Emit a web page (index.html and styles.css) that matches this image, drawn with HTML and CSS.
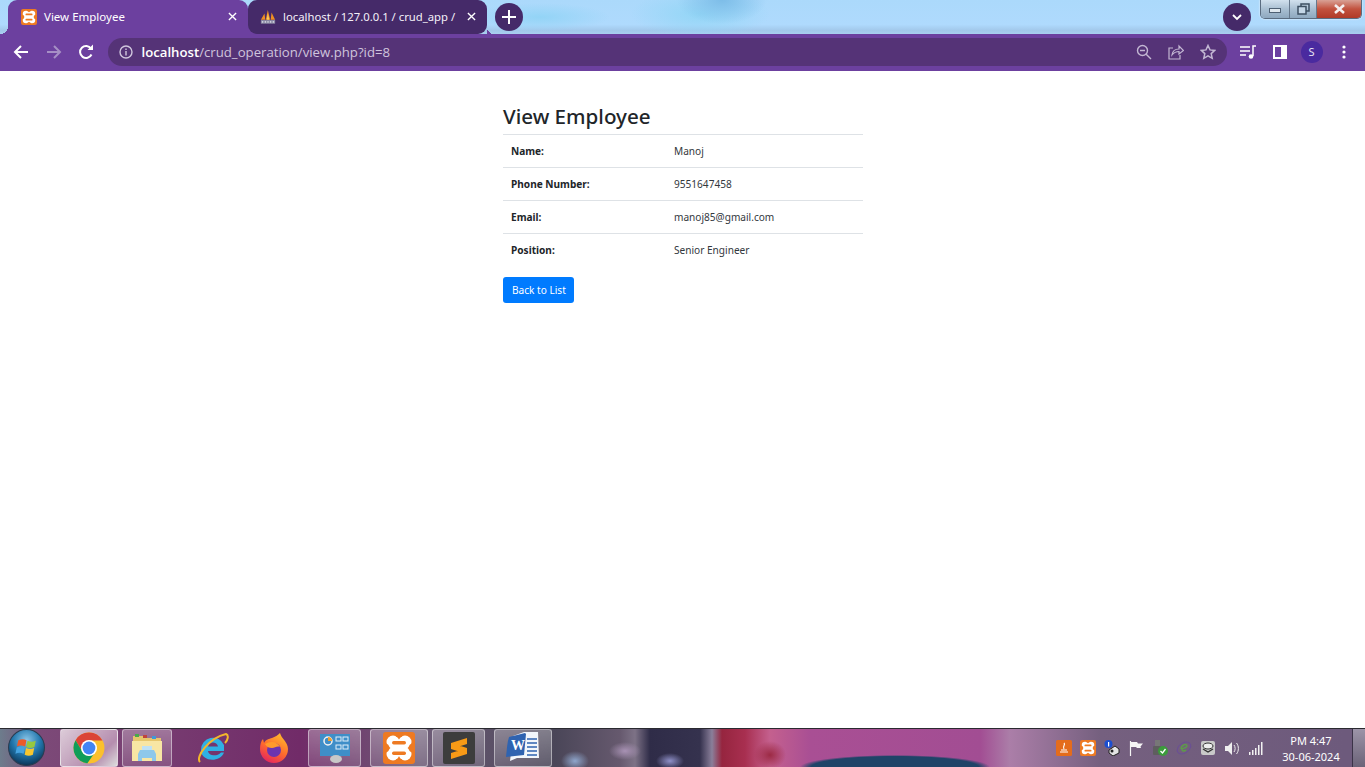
FILE: index.html
```html
<!DOCTYPE html>
<html lang="en">
<head>
    <meta charset="UTF-8">
    <meta name="viewport" content="width=device-width, initial-scale=1.0">
    <title>View Employee</title>
    <link rel="stylesheet" href="styles.css">
</head>
<body>
<div class="screen">

    <!-- tabs -->
    <div class="tabstrip">
        <div class="tab tab-active">
            <svg class="favicon" viewBox="0 0 32 32">
                <rect width="32" height="32" rx="4" fill="#ee7a22"/>
                <circle cx="10" cy="10" r="6.500" fill="#fff"/><circle cx="22" cy="10" r="6.500" fill="#fff"/>
                <circle cx="10" cy="22" r="6.500" fill="#fff"/><circle cx="22" cy="22" r="6.500" fill="#fff"/>
                <rect x="8" y="8" width="16" height="16" fill="#fff"/>
                <circle cx="16" cy="1.500" r="4" fill="#ee7a22"/><circle cx="16" cy="30.500" r="4" fill="#ee7a22"/>
                <circle cx="2" cy="16" r="4.500" fill="#ee7a22"/><circle cx="30" cy="16" r="4.500" fill="#ee7a22"/>
                <rect x="9" y="9" width="14" height="3.500" rx="1.700" fill="#ee7a22"/>
                <rect x="9" y="19.500" width="14" height="3.500" rx="1.700" fill="#ee7a22"/>
            </svg>
            <span class="tab-title">View Employee</span>
            <svg class="tab-close" viewBox="0 0 10 10"><path d="M1 1l8 8M9 1l-8 8" stroke="#fff" stroke-width="1.500"/></svg>
        </div>
        <div class="tab tab-other">
            <svg class="favicon" viewBox="0 0 18 16">
                <path d="M1 11L5 4l1 7zM6.500 11L8.800 0l2.700 11zM12 11l1-8 4 8z" fill="#ef8f22"/>
                <path d="M7.500 11L8.800 4l1.700 7z" fill="#f8cd5c"/>
                <rect x="1" y="11.500" width="16" height="4" fill="#8f8fa8"/>
                <path d="M3 12.500v2M6 12.500v2M9 12.500v2M12 12.500v2M15 12.500v2" stroke="#e4e4ee" stroke-width="1"/>
            </svg>
            <span class="tab-title tab-title-fade">localhost / 127.0.0.1 / crud_app /</span>
            <svg class="tab-close" viewBox="0 0 10 10"><path d="M1 1l8 8M9 1l-8 8" stroke="#fff" stroke-width="1.500"/></svg>
        </div>
        <div class="round-btn new-tab">
            <svg width="14" height="14" viewBox="0 0 14 14"><path d="M7 0v14M0 7h14" stroke="#fff" stroke-width="2"/></svg>
        </div>
        <div class="round-btn tab-search">
            <svg width="10" height="7" viewBox="0 0 10 7"><path d="M1 1l4 4 4-4" fill="none" stroke="#fff" stroke-width="1.800"/></svg>
        </div>
        <div class="win-controls">
            <div class="win-btn win-min"><span class="min-bar"></span></div>
            <div class="win-btn win-max">
                <svg width="13" height="12" viewBox="0 0 13 12"><rect x="4" y="1" width="8" height="7" fill="none" stroke="#3c4f62" stroke-width="1.500"/><rect x="1" y="3.500" width="8" height="7.500" fill="#c4d6e6" stroke="#3c4f62" stroke-width="1.500"/></svg>
            </div>
            <div class="win-btn win-close">
                <svg width="13" height="10" viewBox="0 0 13 10"><path d="M2 1l9 8M11 1L2 9" stroke="#f4eeee" stroke-width="2.600"/></svg>
            </div>
        </div>
    </div>

    <!-- toolbar -->
    <div class="toolbar">
        <div class="nav-btn">
            <svg width="16" height="16" viewBox="0 0 16 16"><path d="M15 8H2M8 2L2 8l6 6" fill="none" stroke="#fff" stroke-width="2"/></svg>
        </div>
        <div class="nav-btn">
            <svg width="16" height="16" viewBox="0 0 16 16"><path d="M1 8h13M8 2l6 6-6 6" fill="none" stroke="#a68fc5" stroke-width="2"/></svg>
        </div>
        <div class="nav-btn">
            <svg width="16" height="16" viewBox="0 0 16 16"><path d="M13.500 10.500A6 6 0 1 1 13 4.500" fill="none" stroke="#fff" stroke-width="2"/><path d="M9.500 6H15V.5z" fill="#fff"/></svg>
        </div>
        <div class="omnibox">
            <svg class="info-icon" width="14" height="14" viewBox="0 0 14 14"><circle cx="7" cy="7" r="6" fill="none" stroke="#d0c6dd" stroke-width="1.400"/><path d="M7 6v4.500M7 3.500v1.500" stroke="#d0c6dd" stroke-width="1.400"/></svg>
            <span class="url"><b>localhost</b>/crud_operation/view.php?id=8</span>
            <div class="omni-icons">
                <svg width="16" height="16" viewBox="0 0 16 16"><circle cx="6.500" cy="6.500" r="5" fill="none" stroke="#c3b7d3" stroke-width="1.400"/><path d="M4 6.500h5M10.200 10.200L15 15" stroke="#c3b7d3" stroke-width="1.400"/></svg>
                <svg width="16" height="16" viewBox="0 0 16 16"><path d="M5 4H1v11h11v-4" fill="none" stroke="#c3b7d3" stroke-width="1.200"/><path d="M4 11c.5-4 3.500-6 7-6V2l4.500 4.500L11 10V7.500c-3 0-5 1-7 3.500z" fill="none" stroke="#c3b7d3" stroke-width="1.200"/></svg>
                <svg width="16" height="16" viewBox="0 0 16 16"><path d="M8 1.500l2 4.400 4.700.5-3.500 3.200 1 4.700L8 11.900l-4.200 2.400 1-4.700L1.300 6.400 6 5.900z" fill="none" stroke="#c3b7d3" stroke-width="1.500"/></svg>
            </div>
        </div>
        <div class="tool-btn">
            <svg width="16" height="14" viewBox="0 0 16 14"><path d="M0 2h10M0 6h10M0 10h6" stroke="#fff" stroke-width="1.500"/><path d="M13 11V1h3" fill="none" stroke="#fff" stroke-width="1.500"/><circle cx="11" cy="11.500" r="2.300" fill="#fff"/></svg>
        </div>
        <div class="tool-btn">
            <svg width="14" height="14" viewBox="0 0 14 14"><rect width="14" height="14" fill="#fff"/><rect x="2" y="2" width="6" height="10" fill="#6b3fa0"/></svg>
        </div>
        <div class="tool-btn"><span class="avatar">S</span></div>
        <div class="tool-btn">
            <svg width="4" height="14" viewBox="0 0 4 14"><circle cx="2" cy="2" r="1.600" fill="#fff"/><circle cx="2" cy="7" r="1.600" fill="#fff"/><circle cx="2" cy="12" r="1.600" fill="#fff"/></svg>
        </div>
    </div>

    <!-- page -->
    <div class="page">
        <div class="container">
            <h2>View Employee</h2>
            <table class="info-table">
                <tr><th>Name:</th><td>Manoj</td></tr>
                <tr><th>Phone Number:</th><td>9551647458</td></tr>
                <tr><th>Email:</th><td>manoj85@gmail.com</td></tr>
                <tr><th>Position:</th><td>Senior Engineer</td></tr>
            </table>
            <a class="btn-primary" href="#">Back to List</a>
        </div>
    </div>

    <!-- taskbar -->
    <div class="taskbar">
        <div class="start-orb">
            <svg width="37" height="37" viewBox="0 0 36 36">
                <defs>
                    <radialGradient id="orb" cx="50%" cy="30%" r="70%"><stop offset="0" stop-color="#8cc6e8"/><stop offset=".55" stop-color="#2277ad"/><stop offset="1" stop-color="#0b3557"/></radialGradient>
                </defs>
                <circle cx="18" cy="18" r="17.500" fill="url(#orb)" stroke="#2a3c50"/>
                <path d="M10 11c3-1.500 5.500-1.500 8 0l-1.300 6c-3-1.300-5.500-1.300-8 0z" fill="#ec5a2a"/>
                <path d="M19 11.500c2.500 1.300 5 1.300 8 0l-1.300 6c-3 1.300-5.500 1.300-8 0z" fill="#97c83e"/>
                <path d="M8.500 18c3-1.300 5-1.300 8 0l-1.300 6c-3-1.300-5-1.300-8 0z" fill="#46a3e0"/>
                <path d="M17.500 18.500c3 1.300 5 1.300 8 0L24.200 25c-3 1.300-5 1.300-8 0z" fill="#f8c62e"/>
            </svg>
        </div>
        <div class="task task-chrome">
            <svg width="32" height="32" viewBox="0 0 30 30">
                <circle cx="15" cy="15" r="14.500" fill="#fbc02d"/>
                <path d="M15 8h12.600A14.500 14.500 0 0 0 2.400 7.700L8.900 18.500A7 7 0 0 1 15 8z" fill="#db4437"/>
                <path d="M2.400 7.700A14.500 14.500 0 0 0 13.500 29.400L21 18.500A7 7 0 0 1 8.900 18.500z" fill="#0f9d58"/>
                <circle cx="15" cy="15" r="7.500" fill="#fff"/>
                <circle cx="15" cy="15" r="6" fill="#4285f4"/>
            </svg>
        </div>
        <div class="task task-plain task-explorer">
            <svg width="32" height="30" viewBox="0 0 32 30">
                <path d="M2 3h12l2 2h14v10H2z" fill="#e6c66c"/>
                <rect x="4" y="1" width="4" height="3" fill="#4aa84a"/>
                <rect x="12" y="2" width="4" height="3" fill="#c0443c"/>
                <rect x="21" y="3" width="4" height="3" fill="#3f9ad8"/>
                <path d="M1 8h30v20H1z" fill="#f8e6a4"/>
                <path d="M9 17h14l2 4v7h-4v-3H11v3H7v-7z" fill="#8ec8ea"/>
                <rect x="11" y="13" width="10" height="4" fill="#bfe2f5"/>
            </svg>
        </div>
        <div class="task-group">
            <svg width="32" height="34" viewBox="0 0 32 32">
                <path d="M4 18a12 12 0 0 1 23-5v6H11c.5 5 9 6 13 1.500h3C23 31 4 30 4 18zM11 14.500h10c-1-5.500-9-5.500-10 0z" fill="#2fb0e4"/>
                <path d="M3 30C-2 25 12 6 29 2c3 1 2 6-1 9" fill="none" stroke="#f3b62b" stroke-width="2"/>
            </svg>
            <svg width="32" height="34" viewBox="0 0 32 32">
                <defs>
                    <linearGradient id="fox" x1="0.800" y1="0" x2="0.300" y2="1"><stop offset="0" stop-color="#ffc02c"/><stop offset=".55" stop-color="#ff6b2c"/><stop offset="1" stop-color="#e5255f"/></linearGradient>
                </defs>
                <path d="M22 1c1 5 8 9 8 16a14 14 0 0 1-28 0c0-4 1-8 3-10l1 4c2-4 5-4 8-5 3-1 6-3 8-5z" fill="url(#fox)"/>
                <circle cx="16" cy="18" r="7" fill="#6d34b0"/>
                <path d="M7 12c5-3 12-3 15 3-3-1.500-5 1-8 1-3 0-5-1-7-4z" fill="#ff9a2c"/>
            </svg>
        </div>
        <div class="task task-plain task-panel">
            <svg width="32" height="32" viewBox="0 0 32 32">
                <rect x="1" y="2" width="30" height="22" fill="#3f8ec8"/>
                <circle cx="9" cy="9" r="4" fill="none" stroke="#f2f2f2" stroke-width="1.500"/>
                <path d="M9 9V5a4 4 0 0 1 4 4z" fill="#f0a030"/>
                <rect x="17" y="5" width="5" height="4" fill="none" stroke="#dfeefa"/>
                <rect x="24" y="5" width="5" height="4" fill="none" stroke="#dfeefa"/>
                <rect x="17" y="13" width="5" height="4" fill="none" stroke="#dfeefa"/>
                <rect x="24" y="13" width="5" height="4" fill="none" stroke="#dfeefa"/>
                <ellipse cx="17" cy="27" rx="6" ry="4" fill="#c8c8c8"/>
            </svg>
        </div>
        <div class="task task-plain task-xampp">
            <svg width="32" height="32" viewBox="0 0 32 32">
                <rect width="32" height="32" rx="3" fill="#ee7a22"/>
                <circle cx="10" cy="10" r="6.500" fill="#fff"/><circle cx="22" cy="10" r="6.500" fill="#fff"/>
                <circle cx="10" cy="22" r="6.500" fill="#fff"/><circle cx="22" cy="22" r="6.500" fill="#fff"/>
                <rect x="8" y="8" width="16" height="16" fill="#fff"/>
                <circle cx="16" cy="1.500" r="4" fill="#ee7a22"/><circle cx="16" cy="30.500" r="4" fill="#ee7a22"/>
                <circle cx="2" cy="16" r="4.500" fill="#ee7a22"/><circle cx="30" cy="16" r="4.500" fill="#ee7a22"/>
                <rect x="9" y="9" width="14" height="3.500" rx="1.700" fill="#ee7a22"/>
                <rect x="9" y="19.500" width="14" height="3.500" rx="1.700" fill="#ee7a22"/>
            </svg>
        </div>
        <div class="task task-plain task-sublime">
            <svg width="32" height="32" viewBox="0 0 32 32">
                <rect width="32" height="32" rx="2" fill="#3d3d3d"/>
                <path d="M8 11L24 6v6L8 17zM8 11l16 5v6L8 17zM8 21l16-5v6L8 27z" fill="#f89a16"/>
            </svg>
        </div>
        <div class="task task-plain task-word">
            <svg width="36" height="34" viewBox="0 0 36 34">
                <path d="M5 30L8 5l11-4h14l1 26H12z" fill="#f2f6fb"/>
                <path d="M1 26c1-8 1-14 3-20l16-4 1 1-2 21z" fill="#2f63b0"/>
                <path d="M22 8h10M22 12h10M22 16h10M22 20h10M22 24h10" stroke="#2f63b0" stroke-width="1.600"/>
                <text x="6" y="19" class="word-w">W</text>
            </svg>
        </div>

        <div class="tray">
            <svg class="tray-icon" viewBox="0 0 16 16"><rect width="16" height="16" rx="1.500" fill="#e46c1c"/><path d="M4 12h8M5 10h6M8 3c2 2-2 3 0 6" fill="none" stroke="#fff" stroke-width="1.200"/></svg>
            <svg class="tray-icon" viewBox="0 0 32 32">
                <rect width="32" height="32" rx="4" fill="#ee7a22"/>
                <circle cx="10" cy="10" r="6.500" fill="#fff"/><circle cx="22" cy="10" r="6.500" fill="#fff"/>
                <circle cx="10" cy="22" r="6.500" fill="#fff"/><circle cx="22" cy="22" r="6.500" fill="#fff"/>
                <rect x="8" y="8" width="16" height="16" fill="#fff"/>
                <circle cx="16" cy="1.500" r="4" fill="#ee7a22"/><circle cx="16" cy="30.500" r="4" fill="#ee7a22"/>
                <circle cx="2" cy="16" r="4.500" fill="#ee7a22"/><circle cx="30" cy="16" r="4.500" fill="#ee7a22"/>
                <rect x="9" y="9" width="14" height="3.500" rx="1.700" fill="#ee7a22"/>
                <rect x="9" y="19.500" width="14" height="3.500" rx="1.700" fill="#ee7a22"/>
            </svg>
            <svg class="tray-icon" viewBox="0 0 16 16"><circle cx="4.500" cy="4" r="4" fill="#1c4fd0"/><rect x="4" y="2" width="1.200" height="4.500" fill="#fff"/><path d="M5 10l6-4 4 3v4l-6 3-4-3z" fill="#e4e4e4" stroke="#222"/><circle cx="8" cy="11" r="1.500" fill="#222"/></svg>
            <svg class="tray-icon" viewBox="0 0 16 16"><path d="M2.500 1v15" stroke="#f5f5f5" stroke-width="1.200"/><path d="M3 2h6l1 1.500h5l-2.500 3 .5 1.500H9L8 7H3z" fill="#f5f5f5"/></svg>
            <svg class="tray-icon" viewBox="0 0 16 16"><rect x="3" y="0" width="5" height="6" fill="#777"/><rect x="1" y="6" width="8" height="9" rx="1" fill="#5e5e5e"/><circle cx="11" cy="11" r="5" fill="#3c9b3c"/><path d="M8.500 11l2 2 3-4" fill="none" stroke="#fff" stroke-width="1.300"/></svg>
            <svg class="tray-icon" viewBox="0 0 16 16"><ellipse cx="8" cy="8" rx="7.500" ry="5" transform="rotate(-35 8 8)" fill="none" stroke="#6a4f95"/><path d="M5 9c0-4 6-6 6-3 0 2-4 2-5 3 0 3 3 2 4 1" fill="none" stroke="#5d9c4a" stroke-width="1.400"/></svg>
            <svg class="tray-icon" viewBox="0 0 16 16"><rect x="1" y="1" width="14" height="14" rx="2" fill="#c9c9c9"/><ellipse cx="8" cy="6" rx="5" ry="3" fill="#eee" stroke="#333"/><path d="M3 9l5 3 5-3" fill="none" stroke="#333" stroke-width="1.400"/></svg>
            <svg class="tray-icon" viewBox="0 0 16 16"><path d="M1 6h3l4-4v13l-4-4H1z" fill="#eee"/><path d="M10 5c1.500 2 1.500 5 0 7M12.500 3c2.500 3 2.500 8 0 11" fill="none" stroke="#eee"/></svg>
            <svg class="tray-icon" viewBox="0 0 16 16"><path d="M1 12h1.500v3H1zM4 10h1.500v5H4zM7 8h1.500v7H7zM10 5h1.500v10H10zM13 2h1.500v13H13z" fill="#f2f2f2"/></svg>
            <div class="clock"><span>PM 4:47</span><span>30-06-2024</span></div>
            <div class="show-desktop"></div>
        </div>
    </div>

</div>
</body>
</html>
```

FILE: styles.css
```css
* {
    box-sizing: border-box;
}

html, body {
    margin: 0;
    height: 100%;
    overflow: hidden;
}

body {
    font-family: 'Noto Sans', 'Open Sans', sans-serif;
    background-color: #fff;
    color: #212529;
}

.screen {
    height: 767px;
    display: flex;
    flex-direction: column;
}

/* tab strip */
.tabstrip {
    height: 34px;
    display: flex;
    align-items: flex-start;
    padding-left: 8px;
    background:
        radial-gradient(ellipse 45px 24px at 722px 0, #7dbde8, transparent),
        radial-gradient(ellipse 70px 14px at 540px 17px, #93d4f6, transparent),
        radial-gradient(ellipse 70px 24px at 700px 14px, #93d6f6, transparent),
        linear-gradient(180deg, #abd9fb 0%, #afdafd 72%, #a2c8ea 90%, #a9cff0 100%);
}

.tab {
    position: relative;
    height: 34px;
    padding-bottom: 1px;
    display: flex;
    align-items: center;
    font-size: 11.500px;
    color: #fff;
}

.tab-active {
    width: 240px;
    padding-left: 13px;
    padding-right: 10px;
    background-color: #6c409f;
    border-radius: 9px 9px 0 0;
}

/* curved foot of the active tab */
.tab-active::before {
    content: "";
    position: absolute;
    left: -8px;
    bottom: 0;
    width: 8px;
    height: 8px;
    background: radial-gradient(circle at 0 0, transparent 8px, #6c409f 8px);
}

.tab-active::after {
    content: "";
    position: absolute;
    left: 100%;
    bottom: 0;
    width: 10px;
    height: 10px;
    background-color: #6c409f;
}

.tab-other {
    z-index: 1;
    width: 239px;
    padding-left: 12px;
    padding-right: 10px;
    font-size: 11.300px;
    background-color: #452a69;
    border-radius: 9px;
}

.tab-other::after {
    content: "";
    position: absolute;
    left: 100%;
    bottom: 0;
    width: 7px;
    height: 7px;
    background: radial-gradient(circle at 100% 0, transparent 7px, #6c409f 7px);
}

.favicon {
    width: 16px;
    height: 16px;
    flex: none;
    margin-right: 7px;
}

.tab-title {
    flex: 1;
    white-space: nowrap;
}

.tab-title-fade {
    color: #f4f0f8;
}

.tab-close {
    width: 9px;
    height: 9px;
    flex: none;
    margin: 0 1px 0 12px;
}

.round-btn {
    width: 28px;
    height: 28px;
    flex: none;
    margin-top: 3px;
    border-radius: 50%;
    background-color: #452a69;
    display: flex;
    align-items: center;
    justify-content: center;
}

.new-tab {
    margin-left: 8px;
}

.tab-search {
    margin-left: auto;
}

.win-controls {
    width: 102px;
    height: 19px;
    flex: none;
    margin: 0 3px 0 9px;
    display: flex;
    border: 1px solid #5a6c80;
    border-top: none;
    border-radius: 0 0 5px 5px;
    overflow: hidden;
    box-shadow: 0 0 2px #fff;
}

.win-btn {
    display: flex;
    align-items: center;
    justify-content: center;
}

.win-min {
    width: 29px;
    background: linear-gradient(180deg, #d2e1ee, #a9bfd2 50%, #8ea8bf);
    border-right: 1px solid #66788c;
}

.min-bar {
    width: 12px;
    height: 5px;
    margin-top: 3px;
    background-color: #dfe8ef;
    border: 1px solid #4e6073;
}

.win-max {
    width: 27px;
    background: linear-gradient(180deg, #d2e1ee, #a9bfd2 50%, #8ea8bf);
    border-right: 1px solid #66788c;
}

.win-close {
    flex: 1;
    background: linear-gradient(180deg, #d9a195, #c2523e 50%, #b03a28);
}

/* toolbar */
.toolbar {
    height: 37px;
    display: flex;
    align-items: center;
    padding: 0 5px 2px;
    background-color: #6c409f;
}

.nav-btn {
    width: 32.500px;
    flex: none;
    display: flex;
    justify-content: center;
}

.omnibox {
    width: 1119px;
    height: 28px;
    margin: 0 5px 0 5px;
    padding: 0 11px 0 11px;
    flex: none;
    display: flex;
    align-items: center;
    border-radius: 14px;
    background-color: #553377;
}

.info-icon {
    flex: none;
    margin-right: 9px;
}

.url {
    font-family: 'Open Sans', 'Noto Sans', sans-serif;
    font-size: 13.200px;
    color: #cfc4dc;
    white-space: nowrap;
}

.url b {
    font-weight: 600;
    color: #fff;
}

.omni-icons {
    margin-left: auto;
    display: flex;
    gap: 16px;
}

.tool-btn {
    width: 32px;
    flex: none;
    display: flex;
    justify-content: center;
    align-items: center;
}

.avatar {
    width: 22px;
    height: 22px;
    border-radius: 50%;
    background-color: #4a2a9f;
    color: #e8e4f4;
    font-size: 11px;
    display: flex;
    align-items: center;
    justify-content: center;
}

/* page content */
.page {
    flex: 1;
    padding-left: 1px;
    background-color: #fff;
}

.container {
    width: 360px;
    margin: 0 auto;
    padding-top: 28px;
}

h2 {
    margin: 0;
    font-size: 20.600px;
    font-weight: 500;
    line-height: 35px;
    color: #212529;
}

.info-table {
    width: 100%;
    border-collapse: collapse;
    margin-bottom: 10px;
    table-layout: fixed;
    font-size: 10.100px;
}

.info-table th,
.info-table td {
    height: 33px;
    padding: 0 8px;
    border-top: 1px solid #dee2e6;
    text-align: left;
    vertical-align: middle;
}

.info-table th {
    width: 163px;
    font-weight: 700;
}

.info-table td {
    font-weight: 400;
    color: #33383d;
}

.btn-primary {
    display: inline-block;
    padding: 0 9px;
    width: 71px;
    height: 26px;
    line-height: 26px;
    white-space: nowrap;
    font-size: 10.100px;
    color: #fff;
    text-decoration: none;
    background-color: #007bff;
    border-radius: 3px;
}

/* taskbar */
.taskbar {
    height: 39px;
    display: flex;
    align-items: stretch;
    border-top: 1px solid #2a2a30;
    background:
        radial-gradient(ellipse 95px 12px at 895px 38px, #1f4468 88%, transparent),
        radial-gradient(ellipse 14px 10px at 575px 32px, #8fa6cc, transparent),
        radial-gradient(ellipse 16px 9px at 625px 22px, #a892b4, transparent),
        radial-gradient(ellipse 14px 8px at 670px 32px, #8f90c8, transparent),
        radial-gradient(ellipse 16px 14px at 770px 26px, #9c2a44, transparent),
        linear-gradient(90deg, #6d7c8c 0, #7c4a78 40px, #712b68 300px, #6f5d78 420px, #4a4658 555px, #66596e 620px, #7d7286 635px, #2f2c48 650px, #35324e 700px, #8a7f9a 712px, #96253f 722px, #a82f50 745px, #c4608e 770px, #a94f94 810px, #a24d93 980px, #ab7ea8 1010px, #75607f 1100px, #6d5a7c 1345px);
}

.start-orb {
    width: 60px;
    flex: none;
    padding: 0 0 0 8px;
}

.task {
    flex: none;
    display: flex;
    align-items: center;
    justify-content: center;
    border: 1px solid rgba(255, 255, 255, 0.45);
    border-radius: 3px;
    background: linear-gradient(180deg, rgba(255, 255, 255, 0.3), rgba(255, 255, 255, 0.12));
}

.task-chrome {
    width: 58px;
    background: linear-gradient(135deg, #dccbd8, #b58dae 70%, #ddd);
}

.task-explorer {
    width: 50px;
    margin-left: 4px;
}

.task-group {
    width: 136px;
    flex: none;
    display: flex;
    align-items: center;
    gap: 29px;
    padding-left: 25px;
}

.task-panel {
    width: 53px;
}

.task-xampp {
    width: 58px;
    margin-left: 9px;
}

.task-sublime {
    width: 53px;
    margin-left: 4px;
}

.task-word {
    width: 58px;
    margin-left: 9px;
}

.word-w {
    font-family: 'Liberation Serif', serif;
    font-size: 14px;
    font-weight: 700;
    fill: #fff;
}

.tray {
    margin-left: auto;
    display: flex;
    align-items: center;
    gap: 8px;
    color: #fff;
}

.tray-icon {
    width: 16px;
    height: 16px;
    flex: none;
}

.clock {
    width: 80px;
    padding-right: 2px;
    display: flex;
    flex-direction: column;
    align-items: center;
    gap: 1px;
    font-size: 11px;
    line-height: 15px;
}

.show-desktop {
    width: 13px;
    height: 100%;
    margin-left: -8px;
    border-left: 1px solid #3b3348;
    background: linear-gradient(180deg, #9c94a8, #6b6378);
}
```
